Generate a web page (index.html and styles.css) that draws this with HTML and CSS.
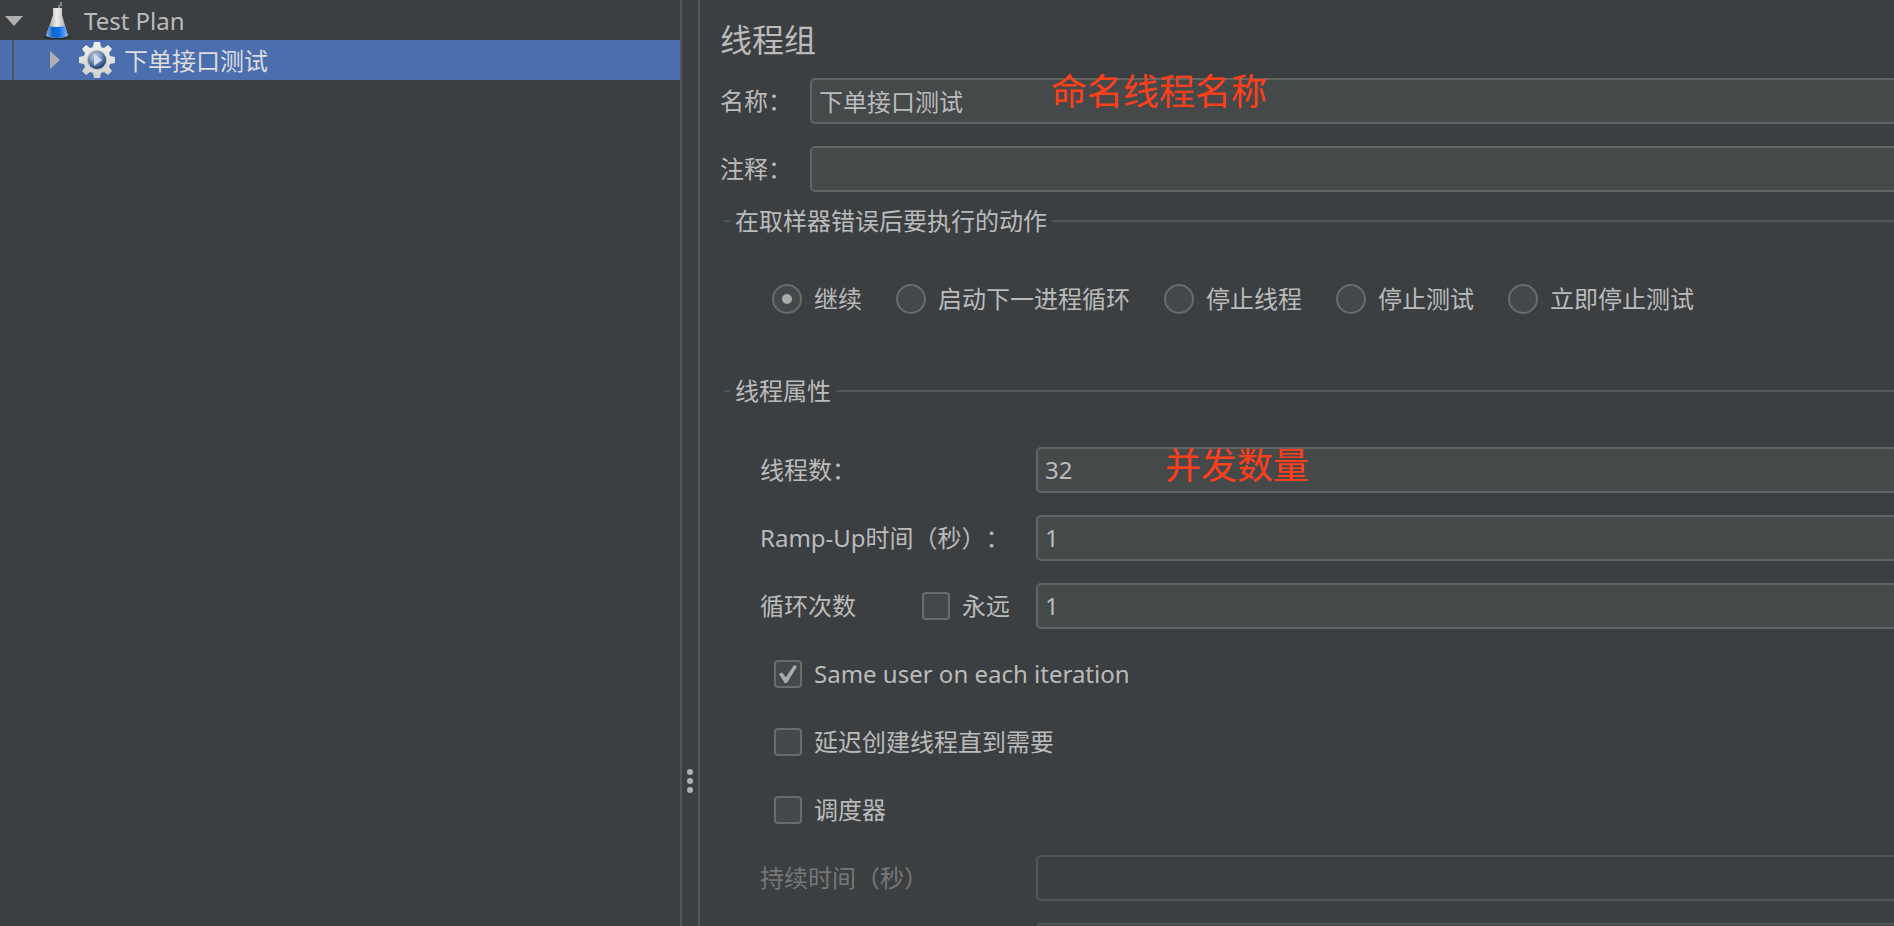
FILE: index.html
```
<!DOCTYPE html>
<html lang="zh-CN">
<head>
    <meta charset="UTF-8">
    <meta name="viewport" content="width=device-width, initial-scale=1.0">
    <title>线程组</title>
    <link rel="stylesheet" href="styles.css">
</head>
<body>
    <div class="app">
        <nav class="tree">
            <div class="tree-row">
                <svg class="arrow arrow-open" width="18" height="20" viewBox="0 0 18 20"><path d="M0 6h18l-9 10z" fill="#b0b0b0"/></svg>
                <svg class="flask" width="32" height="40" viewBox="0 0 32 40">
                    <defs>
                        <linearGradient id="glass" x1="0" x2="1"><stop offset="0" stop-color="#8c8f90"/><stop offset=".5" stop-color="#f0f0ee"/><stop offset="1" stop-color="#9a9c9d"/></linearGradient>
                        <linearGradient id="liquid" x1="0" x2="1"><stop offset="0" stop-color="#8fb8e8"/><stop offset=".3" stop-color="#1565c8"/><stop offset=".6" stop-color="#0a70ee"/><stop offset="1" stop-color="#8fb8e8"/></linearGradient>
                    </defs>
                    <ellipse cx="16" cy="37" rx="14" ry="2" fill="#292c2e"/>
                    <path d="M18 9V6l2-1V2" fill="none" stroke="#85888a" stroke-width="2"/>
                    <path d="M12 8h9v7l6 21q-11 4-22 0l7-21z" fill="url(#glass)"/>
                    <path d="M8 26q8 2 16 0l3 10q-11 4-22 0z" fill="url(#liquid)"/>
                </svg>
                <span class="tree-text">Test Plan</span>
            </div>
            <div class="tree-row tree-child selected">
                <svg class="arrow" width="12" height="20" viewBox="0 0 12 20"><path d="M1 1v18l10-9z" fill="#b0b0b0"/></svg>
                <svg class="gear" width="38" height="38" viewBox="0 0 38 38">
                    <defs>
                        <linearGradient id="metal" x1="0" x2="0" y1="0" y2="1"><stop offset="0" stop-color="#f2f2f0"/><stop offset="1" stop-color="#cfcfcd"/></linearGradient>
                        <radialGradient id="ball" cx=".4" cy=".3" r=".7"><stop offset="0" stop-color="#c3d1e2"/><stop offset=".5" stop-color="#7290b8"/><stop offset="1" stop-color="#17386f"/></radialGradient>
                    </defs>
                    <path fill="url(#metal)" d="M16 1h6l1 5 3 1 4-3 4 4-3 4 1 3 5 1v6l-5 1-1 3 3 4-4 4-4-3-3 1-1 5h-6l-1-5-3-1-4 3-4-4 3-4-1-3-5-1v-6l5-1 1-3-3-4 4-4 4 3 3-1z"/>
                    <circle cx="19" cy="19" r="10" fill="#b3b5b8"/>
                    <circle cx="19" cy="19" r="9" fill="url(#ball)"/>
                    <path d="M16 13v12l8-6z" fill="#d3deec"/>
                </svg>
                <span class="tree-text">下单接口测试</span>
            </div>
        </nav>

        <div class="splitter">
            <span class="dot"></span>
            <span class="dot"></span>
            <span class="dot"></span>
        </div>

        <main class="panel">
            <h1 class="title">线程组</h1>

            <div class="form-row">
                <label class="head-label" for="name">名称：</label>
                <div class="field-wrap">
                    <input class="field" type="text" id="name" value="下单接口测试">
                    <span class="note note-name">命名线程名称</span>
                </div>
            </div>
            <div class="form-row">
                <label class="head-label" for="comment">注释：</label>
                <div class="field-wrap">
                    <input class="field" type="text" id="comment">
                </div>
            </div>

            <section class="group">
                <h2 class="legend">在取样器错误后要执行的动作</h2>
                <div class="radios">
                    <label class="option"><input type="radio" name="action" checked>继续</label>
                    <label class="option"><input type="radio" name="action">启动下一进程循环</label>
                    <label class="option"><input type="radio" name="action">停止线程</label>
                    <label class="option"><input type="radio" name="action">停止测试</label>
                    <label class="option"><input type="radio" name="action">立即停止测试</label>
                </div>
            </section>

            <section class="group">
                <h2 class="legend">线程属性</h2>
                <div class="props">
                    <div class="form-row">
                        <div class="prop-label"><label for="threads">线程数：</label></div>
                        <div class="field-wrap">
                            <input class="field" type="text" id="threads" value="32">
                            <span class="note note-threads">并发数量</span>
                        </div>
                    </div>
                    <div class="form-row">
                        <div class="prop-label"><label for="ramp">Ramp-Up时间（秒）：</label></div>
                        <div class="field-wrap">
                            <input class="field" type="text" id="ramp" value="1">
                        </div>
                    </div>
                    <div class="form-row">
                        <div class="prop-label">
                            <label for="loops">循环次数</label>
                            <label class="option"><input type="checkbox">永远</label>
                        </div>
                        <div class="field-wrap">
                            <input class="field" type="text" id="loops" value="1">
                        </div>
                    </div>
                    <div class="form-row check-row">
                        <label class="option"><input type="checkbox" checked>Same user on each iteration</label>
                    </div>
                    <div class="form-row check-row">
                        <label class="option"><input type="checkbox">延迟创建线程直到需要</label>
                    </div>
                    <div class="form-row check-row">
                        <label class="option"><input type="checkbox">调度器</label>
                    </div>
                    <div class="form-row disabled">
                        <div class="prop-label"><label for="duration">持续时间（秒）</label></div>
                        <div class="field-wrap">
                            <input class="field" type="text" id="duration" disabled>
                        </div>
                    </div>
                    <div class="form-row disabled">
                        <div class="prop-label"></div>
                        <div class="field-wrap">
                            <input class="field" type="text" id="delay" aria-label="启动延迟" disabled>
                        </div>
                    </div>
                </div>
            </section>
        </main>
    </div>
</body>
</html>
```
FILE: styles.css
```
* {
    box-sizing: border-box;
}

body {
    margin: 0;
    background-color: #3c3f41;
    color: #bbb;
    font-family: "Noto Sans", "Noto Sans CJK SC", sans-serif;
    font-size: 24px;
    line-height: 32px;
    text-spacing-trim: space-all;
}

.app {
    display: flex;
    height: 100vh;
    overflow: hidden;
}

/* test plan tree */
.tree {
    flex: 0 0 680px;
    overflow: hidden;
}

.tree-row {
    display: flex;
    align-items: center;
    height: 40px;
    padding-left: 5px;
}

.tree-text {
    padding-top: 2px;
}

.flask {
    margin: 0 11px 0 18px;
}

.tree-child {
    padding-left: 12px;
}

.tree-child::before {
    content: "";
    width: 2px;
    height: 100%;
    margin-right: 35px;
    background-color: #555;
}

.gear {
    margin: 0 8px 0 17px;
}

.selected {
    background-color: #4b6eaf;
    color: #ddd;
}

/* draggable divider */
.splitter {
    display: flex;
    flex: 0 0 20px;
    flex-direction: column;
    align-items: center;
    justify-content: flex-end;
    gap: 3px;
    padding-bottom: 133px;
    border: solid #555;
    border-width: 0 2px;
}

.dot {
    width: 6px;
    height: 6px;
    border-radius: 50%;
    background-color: #afb1b3;
}

/* thread group form */
.panel {
    flex: 1;
    min-width: 0;
    padding: 20px 0 0 20px;
}

.title {
    margin: 0 0 18px;
    font-size: 32px;
    font-weight: normal;
    line-height: 40px;
}

.form-row {
    display: flex;
    align-items: center;
    height: 46px;
    margin-bottom: 22px;
}

.head-label {
    width: 90px;
}

.field-wrap {
    position: relative;
    flex: 1;
}

.field {
    display: block;
    width: calc(100% + 10px);
    height: 46px;
    padding: 0 7px 2px;
    border: 2px solid #646464;
    border-radius: 5px;
    background-color: #45494a;
    color: #bbb;
    font: inherit;
}

.note {
    position: absolute;
    color: #ff3f1a;
    font-size: 36px;
    line-height: 48px;
    pointer-events: none;
}

.note-name {
    top: -10px;
    left: 241px;
}

.note-threads {
    top: -5px;
    left: 129px;
}

.legend {
    display: flex;
    align-items: center;
    gap: 5px;
    margin: 0;
    padding-left: 4px;
    font-size: 24px;
    font-weight: normal;
    line-height: 32px;
}

.legend::before,
.legend::after {
    content: "";
    width: 6px;
    height: 2px;
    background-color: #555;
}

.legend::after {
    flex: 1;
}

.group {
    margin-top: -9px;
}

.radios {
    display: flex;
    gap: 34px;
    height: 147px;
    padding: 46px 0 0 52px;
}

.option {
    display: flex;
    align-items: center;
    gap: 12px;
    height: 32px;
    white-space: nowrap;
}

.option input {
    display: grid;
    place-content: center;
    width: 28px;
    height: 28px;
    margin: 0;
    appearance: none;
    border: 2px solid #6b6b6b;
    border-radius: 4px;
    background-color: #43494a;
}

.option input[type="radio"] {
    width: 30px;
    height: 30px;
    border-radius: 50%;
}

.option input[type="radio"]:checked::before {
    content: "";
    width: 10px;
    height: 10px;
    border-radius: 50%;
    background-color: #ababab;
}

.option input[type="checkbox"]:checked::before {
    content: "";
    width: 18px;
    height: 18px;
    background-color: #ababab;
    clip-path: polygon(0 50%, 17% 42%, 38% 68%, 84% 0, 100% 8%, 44% 100%, 32% 100%);
}

.props {
    padding: 40px 0 0 40px;
}

.prop-label {
    display: flex;
    justify-content: space-between;
    width: 276px;
    padding-right: 26px;
    white-space: nowrap;
}

.check-row {
    padding-left: 14px;
}

.disabled {
    color: #777;
}

.disabled .field {
    border-color: #555;
    background-color: #3c3f41;
}
```
